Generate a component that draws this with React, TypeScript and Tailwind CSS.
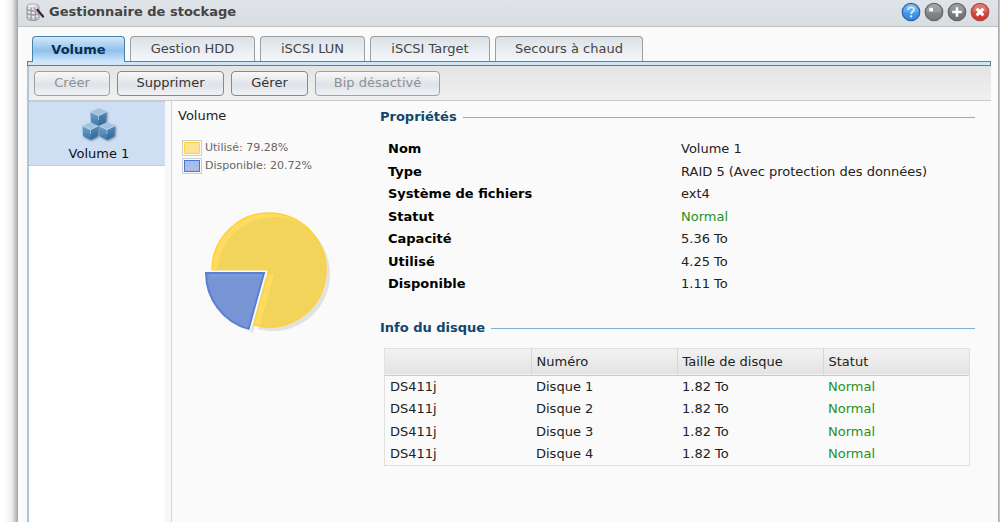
import { useState } from 'react';
import clsx from 'clsx';

const tabs = [
  { label: 'Volume', width: 'w-[93px]' },
  { label: 'Gestion HDD', width: 'w-[125px]' },
  { label: 'iSCSI LUN', width: 'w-[105px]' },
  { label: 'iSCSI Target', width: 'w-[120px]' },
  { label: 'Secours à chaud', width: 'w-[148px]' },
];

const actions = [
  { label: 'Créer', width: 'w-[76px]', disabled: true },
  { label: 'Supprimer', width: 'w-[107px]', disabled: false },
  { label: 'Gérer', width: 'w-[77px]', disabled: false },
  { label: 'Bip désactivé', width: 'w-[125px]', disabled: true },
];

const properties = [
  { name: 'Nom', value: 'Volume 1' },
  { name: 'Type', value: 'RAID 5 (Avec protection des données)' },
  { name: 'Système de fichiers', value: 'ext4' },
  { name: 'Statut', value: 'Normal' },
  { name: 'Capacité', value: '5.36 To' },
  { name: 'Utilisé', value: '4.25 To' },
  { name: 'Disponible', value: '1.11 To' },
];

const disks = ['Disque 1', 'Disque 2', 'Disque 3', 'Disque 4'];

const StorageIcon = () => (
  <svg width="20" height="20" viewBox="0 0 20 20" aria-hidden="true">
    <path d="M1 4Q1 2 7 2Q13 2 13 4V16.5Q13 18.5 7 18.5Q1 18.5 1 16.5Z" fill="#c6c6c9" stroke="#8f8f93" strokeWidth="0.9" />
    <ellipse cx="7" cy="4" rx="5.3" ry="1.7" fill="#eeeef0" />
    <path d="M1 7.5Q3 9.2 7 9.2T13 7.5M1 11.2Q3 13 7 13T13 11.2M5 5.5V18M9.3 5.5V18" fill="none" stroke="#8f8f93" strokeWidth="0.9" />
    <path d="M2 6.4H4.2M6 7H8.5M2 10.2H4.2M6 10.8H8.5M2 14.3H4.2M6 15H8.5M10.2 14.3H12" stroke="#f0f0f2" strokeWidth="1.4" />
    <circle cx="10" cy="6" r="3.2" fill="#dcbce8" opacity="0.8" />
    <path d="M9.5 5.5L17 14.5" stroke="#35283f" strokeWidth="2.3" strokeLinecap="round" />
    <path d="M8.5 4L10.5 6.5" stroke="#f7eafa" strokeWidth="2" strokeLinecap="round" />
  </svg>
);

const Cube = ({ x, y }: { x: number; y: number }) => (
  <g transform={`translate(${x} ${y})`}>
    <path d="M8.5 0.5L16.5 4L8.5 8L0.5 4Z" fill="#9fc4e1" />
    <path d="M0.5 4L8.5 8V18L1 14Z" fill="url(#cubeLeft)" />
    <path d="M16.5 4L8.5 8V18L16 14Z" fill="url(#cubeRight)" />
    <path d="M1 4L8.5 7.8L16 4" fill="none" stroke="#c0dbee" strokeWidth="0.8" />
    <path d="M8.5 8V12" stroke="#a4c7e2" strokeWidth="0.8" />
  </g>
);

const VolumeIcon = () => (
  <svg width="38" height="38" viewBox="0 0 38 38" aria-hidden="true">
    <defs>
      <linearGradient id="cubeLeft" x1="0" y1="0" x2="0" y2="1">
        <stop offset="0" stopColor="#6fa3cd" />
        <stop offset="1" stopColor="#3a76a9" />
      </linearGradient>
      <linearGradient id="cubeRight" x1="0" y1="0" x2="0" y2="1">
        <stop offset="0" stopColor="#5189b8" />
        <stop offset="1" stopColor="#316796" />
      </linearGradient>
      <filter id="cubeShadow" x="-20%" y="-20%" width="140%" height="140%">
        <feDropShadow dx="1" dy="1" stdDeviation="0.8" floodColor="#3c5369" floodOpacity="0.7" />
      </filter>
    </defs>
    <g filter="url(#cubeShadow)">
      <Cube x={10} y={1} />
      <Cube x={2} y={15} />
      <Cube x={18.5} y={15} />
    </g>
  </svg>
);

const HelpGlyph = () => (
  <>
    <path d="M6.8 7.6C6.8 5.6 8 5 9.5 5C11.2 5 12.4 5.8 12.4 7.3C12.4 9 9.7 9 9.6 11.4" fill="none" stroke="#d3e9fb" strokeWidth="1.8" />
    <path d="M9.6 12.6V14.6" stroke="#d3e9fb" strokeWidth="2" />
  </>
);
const MinimizeGlyph = () => <rect x="5" y="5.5" width="3.6" height="3.6" rx="1" fill="#fff" />;
const MaximizeGlyph = () => <path d="M9.5 5V14M5 9.5H14" stroke="#fff" strokeWidth="2.4" />;
const CloseGlyph = () => <path d="M6.3 6.3L12.7 12.7M12.7 6.3L6.3 12.7" stroke="#fff" strokeWidth="2.8" />;

const windowControls = [
  { label: 'Aide', top: '#6db0ea', bottom: '#2a86de', ring: '#2a66ab', glyph: <HelpGlyph /> },
  { label: 'Réduire', top: '#9a9b9c', bottom: '#757677', ring: '#66676a', glyph: <MinimizeGlyph /> },
  { label: 'Agrandir', top: '#8d8f90', bottom: '#6c6d6f', ring: '#66676a', glyph: <MaximizeGlyph /> },
  { label: 'Fermer', top: '#dc6a64', bottom: '#cb312c', ring: '#b54540', glyph: <CloseGlyph /> },
];

const UsagePie = () => (
  <svg className="ml-[22px]" width="135" height="130" viewBox="0 0 135 130" role="img" aria-label="Utilisé 79.28%, disponible 20.72%">
    <defs>
      <clipPath id="usedClip">
        <path d="M69 65L12 65A57 57 0 1 1 53.9 120Z" />
      </clipPath>
    </defs>
    <g fill="#e2e2e2" transform="translate(4 4)">
      <path d="M69 65L12 65A57 57 0 1 1 53.9 120Z" />
      <path d="M64 68L6 68A58 58 0 0 0 48.6 123.9Z" />
    </g>
    <path d="M69 65L12 65A57 57 0 1 1 53.9 120Z" fill="#ffdc5f" />
    <g clipPath="url(#usedClip)">
      <path d="M74 69L17 69A57 57 0 1 1 58.9 124Z" fill="#f2d45d" />
    </g>
    <path d="M69 65L12 65A57 57 0 1 1 53.9 120Z" fill="none" stroke="#fdd337" strokeWidth="1.5" />
    <path d="M64 68L6 68A58 58 0 0 0 48.6 123.9Z" fill="#7794d5" stroke="#fafafa" strokeWidth="5" />
    <path d="M64 68L6 68A58 58 0 0 0 48.6 123.9Z" fill="#7794d5" stroke="#5a80d0" strokeWidth="2" />
    <path d="M61 71L10 71" stroke="#7e9ade" strokeWidth="3" />
  </svg>
);

const SectionTitle = ({ children }: { children: string }) => (
  <div className="flex items-center gap-[6px]">
    <h2 className="h-[18px] leading-[18px] font-bold text-[#11466f]">{children}</h2>
    <span className="h-px flex-1 bg-[#7fb2d5]" />
  </div>
);

const App = () => {
  const [activeTab, setActiveTab] = useState('Volume');

  return (
    <div className="flex min-h-screen bg-white font-['Verdana','DejaVu_Sans',sans-serif] text-[13px] text-[#222]">
      <div className="w-[17px] bg-linear-to-r from-white from-25% via-[#ededed] via-70% to-[#b0b0b0]" />

      <div className="flex flex-1 flex-col border-x border-[#a9a9a9] bg-[#fafafa]">
        <header className="flex h-[27px] items-center border-b border-[#bfc3c6] bg-linear-to-b from-[#e0e4e9] to-[#d8dde2] pb-[3px] pl-[8px] pr-[8px]">
          <StorageIcon />
          <h1 className="ml-[3px] flex-1 font-bold text-[#444]">Gestionnaire de stockage</h1>
          <div className="flex gap-[3px]">
            {windowControls.map((control) => (
              <button key={control.label} type="button" aria-label={control.label}>
                <svg width="20" height="20" viewBox="0 0 19 19">
                  <defs>
                    <linearGradient id={control.label} x1="0" y1="0" x2="0" y2="1">
                      <stop offset="0" stopColor={control.top} />
                      <stop offset="1" stopColor={control.bottom} />
                    </linearGradient>
                  </defs>
                  <circle cx="9.5" cy="9.5" r="8.3" fill={`url(#${control.label})`} stroke={control.ring} strokeWidth="1.2" />
                  <path d="M2.5 9A7 7 0 0 1 16.5 9Q9.5 11 2.5 9Z" fill="#fff" opacity="0.14" />
                  {control.glyph}
                </svg>
              </button>
            ))}
          </div>
        </header>

        <div className="flex flex-1 flex-col pl-[9px] pt-[9px]">
          {/* Tabs */}
          <nav className="z-10 -mb-px flex items-start gap-[5px] pl-[5px]">
            {tabs.map((tab) => (
              <button
                key={tab.label}
                type="button"
                onClick={() => setActiveTab(tab.label)}
                className={clsx(
                  'rounded-t-[4px] border border-b-0',
                  tab.width,
                  tab.label === activeTab
                    ? 'h-[26px] border-[#4682ac] bg-linear-to-b from-[#d5e8fa] via-[#8fc0ec] via-55% to-[#d3e8fb] font-bold text-[#0b2f52]'
                    : 'h-[25px] border-[#9b9fa3] bg-linear-to-b from-[#dce1e6] to-[#f4f8fb] text-[#444]',
                )}
              >
                {tab.label}
              </button>
            ))}
          </nav>
          <div className="mr-[7px] h-[5px] border border-[#4e83ab] bg-[#cfe5f8]" />

          <div className="flex flex-1 flex-col border-l-2 border-[#adc5d8]">
            {/* Toolbar */}
            <div className="mr-[7px] flex h-[35px] items-center gap-[7px] border-b border-[#cacaca] bg-linear-to-b from-[#e4e4e4] to-[#f0f0f0] pl-[5px]">
              {actions.map((action) => (
                <button
                  key={action.label}
                  type="button"
                  disabled={action.disabled}
                  className={clsx(
                    'h-[25px] rounded-[4px] border bg-linear-to-b from-[#f7f8fa] via-[#dfe3e8] via-55% to-[#eff2f5]',
                    action.width,
                    action.disabled ? 'border-[#9da1a4] text-[#909090]' : 'border-[#85898d] text-[#333]',
                  )}
                >
                  {action.label}
                </button>
              ))}
            </div>

            <div className="flex flex-1">
              {/* Volume list */}
              <aside className="w-[136px] bg-white">
                <button
                  type="button"
                  className="flex h-[65px] w-full flex-col items-center border-y border-dotted border-[#b0bccb] bg-[#cedff3] pt-[5px] pl-[4px] text-[#111]"
                >
                  <VolumeIcon />
                  <span className="leading-[18px]">Volume 1</span>
                </button>
              </aside>
              <div className="w-[7px] border-r border-[#d5d5d5] bg-[#f7f7f7]" />

              <main className="flex flex-1 pr-[23px]">
                <section className="w-[208px] pl-[6px] pt-[6px]">
                  <h2 className="leading-[18px]">Volume</h2>
                  <ul className="mt-[14px] ml-[4px] text-[11px] text-[#666]">
                    <li className="flex h-[18px] items-center gap-[3px]">
                      <span className="h-[16px] w-[20px] border border-[#ccc] p-px">
                        <span className="block h-full border border-[#fdd337] bg-[#fde492]" />
                      </span>
                      Utilisé: 79.28%
                    </li>
                    <li className="flex h-[18px] items-center gap-[3px]">
                      <span className="h-[16px] w-[20px] border border-[#ccc] p-px">
                        <span className="block h-full border border-[#4a77cf] bg-[#a9bbe8]" />
                      </span>
                      Disponible: 20.72%
                    </li>
                  </ul>
                  <div className="mt-[30px]">
                    <UsagePie />
                  </div>
                </section>

                <section className="flex-1 pt-[7px]">
                  <SectionTitle>Propriétés</SectionTitle>
                  <dl className="mt-[12px] mb-[24px] grid h-[157px] grid-rows-7 pl-[8px]">
                    {properties.map((property) => (
                      <div key={property.name} className="flex items-center">
                        <dt className="w-[293px] font-bold text-black">{property.name}</dt>
                        <dd className={clsx(property.value === 'Normal' && 'text-[#1f911f]')}>{property.value}</dd>
                      </div>
                    ))}
                  </dl>

                  <SectionTitle>Info du disque</SectionTitle>
                  <div className="mt-[11px] ml-[4px] mr-[5px] border border-[#e0e0e0]">
                    <table className="h-[116px] w-full table-fixed text-left">
                      <thead>
                        <tr className="h-[26px] border-b border-[#c9c9c9] bg-linear-to-b from-[#f2f2f2] to-[#e3e3e3]">
                          <th aria-label="Boîtier" />
                          <th className="border-l border-[#d6d6d6] pl-[5px] font-normal">Numéro</th>
                          <th className="border-l border-[#d6d6d6] pl-[5px] font-normal">Taille de disque</th>
                          <th className="border-l border-[#d6d6d6] pl-[5px] font-normal">Statut</th>
                        </tr>
                      </thead>
                      <tbody>
                        {disks.map((disk) => (
                          <tr key={disk}>
                            <td className="pl-[5px]">DS411j</td>
                            <td className="pl-[5px]">{disk}</td>
                            <td className="pl-[5px]">1.82 To</td>
                            <td className="pl-[5px] text-[#1f911f]">Normal</td>
                          </tr>
                        ))}
                      </tbody>
                    </table>
                  </div>
                </section>
              </main>
            </div>
          </div>
        </div>
      </div>

      <div className="w-px bg-[#c4c4c4]" />
    </div>
  );
};

export default App;
